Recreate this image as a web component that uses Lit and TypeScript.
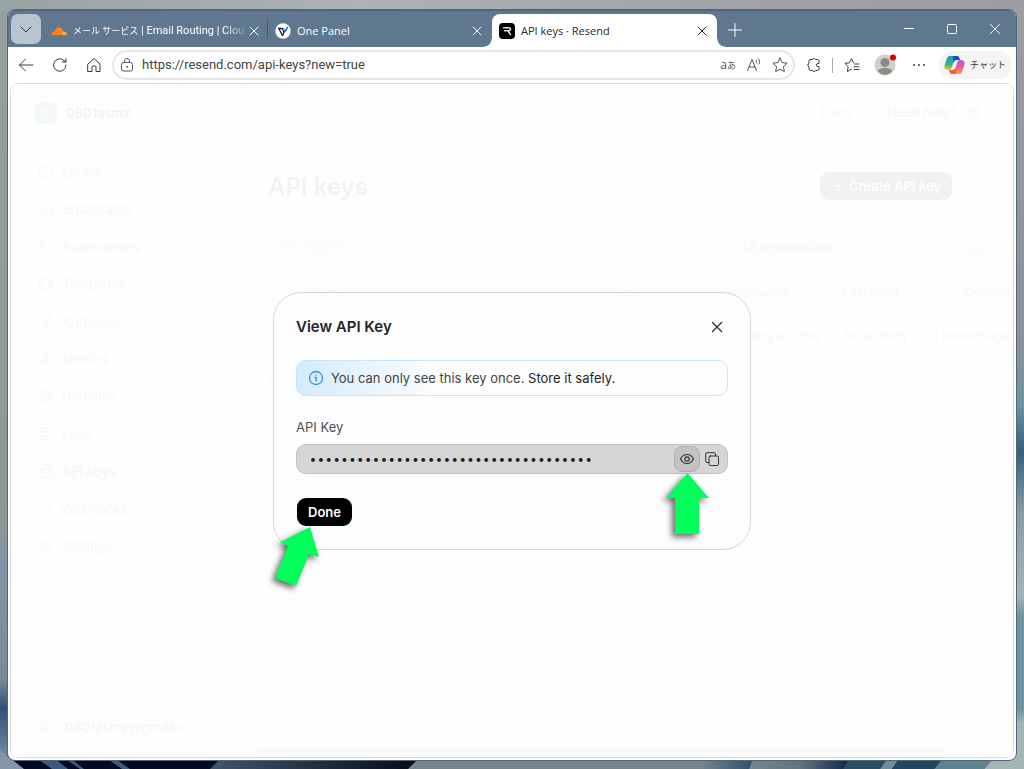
import { LitElement, html, css, svg, nothing } from "lit";
import { customElement, state } from "lit/decorators.js";

const glyph = (body: unknown, cls = "ic", box = "0 0 16 16") =>
  html`<svg class=${cls} viewBox=${box} aria-hidden="true">${body}</svg>`;

const NAV: { label: string; icon: unknown; current?: boolean }[] = [
  { label: "Emails", icon: svg`<path d="M1.5 2.5h13v11h-13zM1.5 3l6.500 6 6.500-6"/>` },
  { label: "Broadcasts", icon: svg`<path d="M4 3h8l2.200 5.500v5H1.800v-5zM1.800 9h3.700a2.500 2.500 0 0 0 5 0h3.700"/>` },
  { label: "Automations", icon: svg`<rect x="1.500" y="1.500" width="5" height="5" rx="1.500"/><rect x="9.500" y="9.500" width="5" height="5" rx="1.500"/><path d="M4 6.500V12h5.500"/>` },
  { label: "Templates", icon: svg`<rect x="4.500" y="2.500" width="7" height="11" rx="1"/><path d="M4.500 4h-3v8h3M11.500 4h3v8h-3"/>` },
  { label: "Audience", icon: svg`<circle cx="4" cy="3.500" r="1.700"/><circle cx="12" cy="3.500" r="1.700"/><circle cx="8" cy="8" r="2"/><path d="M1.500 9.500c0-2 4-2 4-1M14.500 9.500c0-2-4-2-4-1M4.500 14c0-3.500 7-3.500 7 0z"/>` },
  { label: "Metrics", icon: svg`<path d="M1.500 7.500h3v6h-3zM6.500 1.500h3v12h-3zM11.500 4.500h3v9h-3z"/>` },
  { label: "Domains", icon: svg`<circle cx="8" cy="8" r="6.700"/><path d="M1.300 8h13.400M8 1.300c-4 4-4 9.400 0 13.400 4-4 4-9.400 0-13.400z"/>` },
  { label: "Logs", icon: svg`<path d="M1.500 2.500h13M1.500 13.500h13M2 5.500h12v5H2z"/>` },
  { label: "API keys", current: true, icon: svg`<rect x="2.500" y="6.500" width="11" height="8" rx="1.500"/><path d="M5 6.500V4.500a3 3 0 0 1 6 0v2M8 9.500v2"/>` },
  { label: "Webhooks", icon: svg`<path d="M5 12V2.500M2 5.500l3-3 3 3M11 4v9.500M8 10.500l3 3 3-3"/>` },
  { label: "Settings", icon: svg`<path d="M1.500 3.500h2M6.500 3.500h8M1.500 8h7M11.500 8h3M1.500 12.500h2M6.500 12.500h8"/><circle cx="5" cy="3.500" r="1.500"/><circle cx="10" cy="8" r="1.500"/><circle cx="5" cy="12.500" r="1.500"/>` },
];

@customElement("browser-chrome")
export class BrowserChrome extends LitElement {
  static styles = css`
    :host { display: block; flex: none; font: 12px/16px "Open Sans", "Noto Sans CJK JP", sans-serif; color: #3c3c3c; }
    button { font: inherit; color: inherit; background: none; border: 0; padding: 0; margin: 0; display: grid; place-items: center; flex: none; }
    svg { display: block; flex: none; fill: none; stroke: currentColor; stroke-width: 1; stroke-linecap: round; stroke-linejoin: round; }
    .ic { width: 16px; height: 16px; }
    .strip { display: flex; height: 37px; background: #5f788f; color: #fff; border-top: 1px solid #4f677d; box-sizing: border-box; padding-left: 3px; }
    .menu { width: 30px; height: 30px; margin-top: 3px; border-radius: 7px; background: #b8c4cf; color: #333; }
    .tab { display: flex; align-items: center; flex: 0 0 225px; box-sizing: border-box; margin-top: 3px; padding: 0 7px 0 8px; min-width: 0; }
    .first { flex-basis: 226px; padding: 0 5px 0 10px; }
    .label { flex: 1; min-width: 0; overflow: hidden; white-space: nowrap; margin-left: 6px; font-size: 11px; }
    .kana { font-size: 9px; }
    .fade { font-family: Roboto, "Noto Sans CJK JP", sans-serif; -webkit-mask-image: linear-gradient(90deg, #000 88%, rgba(0, 0, 0, 0.15)); }
    .second { position: relative; }
    .second::before { content: ""; position: absolute; left: 0; top: 5px; height: 19px; width: 1px; background: #43596c; }
    .active { background: #fff; color: #2c2c2c; border-radius: 8px 8px 0 0; padding-left: 7px; position: relative; }
    .active::before, .active::after { content: ""; position: absolute; bottom: 0; width: 8px; height: 8px; }
    .active::before { left: -8px; background: radial-gradient(circle at 0 0, transparent 7px, #fff 8px); }
    .active::after { right: -8px; background: radial-gradient(circle at 100% 0, transparent 7px, #fff 8px); }
    .add { width: 36px; margin-top: 2px; }
    .win { width: 43px; }
    .wins { margin-left: auto; display: flex; }
    .bar { display: flex; align-items: center; height: 36px; background: #fff; padding: 0 4px 0 10px; }
    .nav { display: flex; gap: 18px; margin-right: 10px; }
    .addr { flex: 1; min-width: 0; display: flex; align-items: center; box-sizing: border-box; height: 30px; border: 2px solid #e6e6e6; border-radius: 15px; padding: 0 5px; gap: 10px; color: #555; }
    .url { flex: 1; min-width: 0; border: 0; outline: 0; padding: 0; background: none; font: 13px/20px Roboto, sans-serif; color: #444; margin-left: -3px; }
    .lang { font-size: 12px; }
    .right { display: flex; align-items: center; margin-left: 11px; }
    .sep { width: 1px; height: 15px; background: #aaa; margin: 0 11px 0 10px; }
    .me { margin: 0 15px 0 14px; }
    .dots { margin-right: 12px; }
    .chat { display: flex; align-items: center; gap: 5px; height: 28px; width: 73px; padding-left: 5px; box-sizing: border-box; border-radius: 14px; background: #f4f4f4; font-size: 9px; white-space: nowrap; }
  `;

  private cross = glyph(svg`<path d="M4 4l8 8M12 4l-8 8"/>`);

  render() {
    return html`
      <div class="strip" role="tablist">
        <button class="menu" aria-label="Tab actions">${glyph(svg`<path d="M3 6l5 5 5-5"/>`)}</button>
        <div class="tab first" role="tab">
          <svg class="ic" viewBox="0 0 16 16" style="stroke:none"><path fill="#f6821f" d="M.5 12c0-2.500 1-3.500 3-3.500C4.500 5 6.500 4 8.500 4.500c2.500 0 3.500 2.500 3.500 4L11 12z"/><path fill="#fbad41" d="M11.800 8.500c2.700-.5 4.200 1.200 4.200 3.500h-5.200z"/></svg>
          <span class="label fade"><span class="kana">メール サービス</span> | Email Routing | Clou</span>
          <button aria-label="Close tab">${this.cross}</button>
        </div>
        <div class="tab second" role="tab">
          <svg class="ic" viewBox="0 0 16 16"><circle cx="8" cy="8" r="7.700" fill="#fff" stroke="none"/><path d="M3.500 5l4 7.500 1.500-3-1.500-4H5" stroke="#15243d" stroke-width="1.400"/><path d="M8.500 6.500l1.500 2 2.500-4" stroke="#2a6fc0" stroke-width="1.600"/></svg>
          <span class="label">One Panel</span>
          <button aria-label="Close tab">${this.cross}</button>
        </div>
        <div class="tab active" role="tab" aria-selected="true">
          <svg class="ic" viewBox="0 0 16 16"><rect width="16" height="16" rx="4" fill="#000" stroke="none"/><path d="M4.500 4.800H10c2 0 2 3 0 3H5.500M9 8l2.500 3.500" stroke="#ddd" stroke-width="1.500"/></svg>
          <span class="label">API keys · Resend</span>
          <button aria-label="Close tab">${this.cross}</button>
        </div>
        <button class="add" aria-label="New tab">${glyph(svg`<path d="M8 1.500v13M1.500 8h13"/>`)}</button>
        <div class="wins">
          <button class="win" aria-label="Minimize">${glyph(svg`<path d="M3.500 7.500h9"/>`)}</button>
          <button class="win" aria-label="Maximize">${glyph(svg`<rect x="3.500" y="3.500" width="9" height="9" rx="1"/>`)}</button>
          <button class="win" aria-label="Close">${glyph(svg`<path d="M3.500 3.500l9 9M12.500 3.500l-9 9"/>`)}</button>
        </div>
      </div>
      <div class="bar">
        <div class="nav">
          <button aria-label="Back">${glyph(svg`<path d="M15 8H1.500M7.500 2L1.500 8l6 6"/>`)}</button>
          <button aria-label="Reload">${glyph(svg`<path d="M14 8a6.200 6.200 0 1 1-2-4.500L14 5M14 1.500V5h-3.500"/>`)}</button>
          <button aria-label="Home">${glyph(svg`<path d="M2 7l6-5.500L14 7v7.500h-4V10a1 1 0 0 0-1-1H7a1 1 0 0 0-1 1v4.500H2z"/>`)}</button>
        </div>
        <div class="addr">
          <button aria-label="Site information">${glyph(svg`<rect x="2.500" y="5.500" width="11" height="8.500" rx="2"/><path d="M5.500 5.500V4a2.500 2.500 0 0 1 5 0v1.500"/><circle cx="8" cy="9.800" r=".4" fill="currentColor"/>`)}</button>
          <input class="url" aria-label="Address" .value=${"https://resend.com/api-keys?new=true"} />
          <button class="lang" aria-label="Translate"><span>a<span class="kana">あ</span></span></button>
          <button aria-label="Read aloud">${glyph(svg`<path d="M1.500 13.500L6 2.500l4.500 11M3 10h6M10 3c1 1 1 2 .5 3M12 1.500c2 1.500 2 4 1 5.500"/>`)}</button>
          <button aria-label="Favorite">${glyph(svg`<path d="M8 1l2.100 4.600 5 .6-3.700 3.400 1 5L8 12.100 3.600 14.600l1-5L.9 6.200l5-.6z"/>`)}</button>
        </div>
        <div class="right">
          <button aria-label="Extensions">${glyph(svg`<path d="M4.500 2.500h2a1.600 1.600 0 0 1 3 0h2a1.500 1.500 0 0 1 1.500 1.500v2.500h-1a1.600 1.600 0 1 0 0 3.200h1V12a1.500 1.500 0 0 1-1.500 1.500h-2a1.600 1.600 0 0 1-3 0h-2A1.500 1.500 0 0 1 3 12V9.600a1.600 1.600 0 0 1 0-3.100V4a1.500 1.500 0 0 1 1.500-1.500z"/>`)}</button>
          <span class="sep"></span>
          <button aria-label="Favorites list">${glyph(svg`<path d="M9.500 6L7.500 1.500 5.500 5.800.9 6.400l3.300 3.200-.8 4.900 4-2.300M10.500 7H15M10 9.800h5M10 12.500h5"/>`)}</button>
          <button class="me" aria-label="Profile">
            <svg width="22" height="22" viewBox="0 0 22 22" style="stroke:none"><circle cx="11" cy="11" r="10.500" fill="#cfcfcb"/><circle cx="11" cy="8.500" r="4.500" fill="#8a8a86"/><path d="M4 17c0-4 14-4 14 0-4 5-10 5-14 0z" fill="#8a8a86"/><circle cx="19" cy="3.500" r="3" fill="#e00000"/></svg>
          </button>
          <button class="dots" aria-label="Settings and more">${glyph(svg`<g fill="currentColor" stroke="none"><circle cx="3" cy="8" r="1"/><circle cx="8" cy="8" r="1"/><circle cx="13" cy="8" r="1"/></g>`)}</button>
          <button class="chat">
            <svg width="21" height="20" viewBox="0 0 21 20" style="stroke:none">
              <defs>
                <linearGradient id="a" x2="0" y2="1"><stop stop-color="#1596e0"/><stop offset=".6" stop-color="#3cb878"/><stop offset="1" stop-color="#f2c81e"/></linearGradient>
                <linearGradient id="b" x2="0" y2="1"><stop stop-color="#a060f0"/><stop offset=".5" stop-color="#f05a8c"/><stop offset="1" stop-color="#ff9a4a"/></linearGradient>
              </defs>
              <path fill="url(#a)" d="M6 1h8c-2 0-3 1-4 4L8 12c-1 3-2 3-4 3-4 0-4-3-3-6l2-6c.5-1 1-2 3-2z"/>
              <path fill="#1c4fc4" d="M9 1h4c2 0 2 1 3 4h-3c-2 0-3 1-4 3z"/>
              <path fill="url(#b)" d="M15 19H7c2 0 3-1 4-4l2-7c1-3 2-3 4-3 4 0 4 3 3 6l-2 6c-.5 1-1 2-3 2z"/>
              <path fill="#f0622c" d="M12 19H8c-2 0-2-1-3-4h3c2 0 3-1 4-3z"/>
            </svg>
            チャット
          </button>
        </div>
      </div>
    `;
  }
}

@customElement("keys-page")
export class KeysPage extends LitElement {
  static styles = css`
    :host { display: flex; flex: 1; min-width: 0; min-height: 0; background: #fdfdfd; color: #222; font: 500 13px/18px Inter, sans-serif; }
    button, select, input { font: inherit; color: inherit; box-sizing: border-box; margin: 0; }
    button { background: none; border: 0; padding: 0; }
    svg { display: block; fill: none; stroke: currentColor; stroke-width: 1; stroke-linejoin: round; flex: none; }
    .ic { width: 16px; height: 16px; }
    .side { flex: 0 0 234px; min-width: 0; box-sizing: border-box; border-right: 1px solid #ccc; display: flex; flex-direction: column; padding: 18px 15px 19px 17px; }
    .team { display: flex; align-items: center; gap: 9px; padding: 0 5px 0 7px; height: 22px; font-weight: 600; }
    .badge { width: 22px; height: 22px; border-radius: 6px; display: grid; place-items: center; background: #2d918a; color: #fff; font: 600 12px/16px Inter, sans-serif; }
    .grow { flex: 1; }
    .nav { display: flex; flex-direction: column; justify-content: space-between; height: 404px; margin-top: 33px; }
    .nav a { display: flex; align-items: center; gap: 8px; height: 30px; padding-left: 10px; border-radius: 8px; color: #777; text-decoration: none; font-weight: 500; }
    .nav .cur { background: #e4e4e4; color: #555; }
    .user { margin-top: auto; display: flex; align-items: center; gap: 11px; padding: 0 5px 0 4px; color: #555; }
    .round { width: 22px; height: 22px; border-radius: 50%; background: #e4e4e4; display: grid; place-items: center; font-size: 12px; }
    .main { flex: 1; min-width: 0; display: flex; flex-direction: column; overflow: hidden; }
    .top { display: flex; align-items: center; justify-content: flex-end; gap: 22px; height: 56px; box-sizing: border-box; border-bottom: 1px solid #ccc; padding: 0 23px; }
    .top a { color: #777; text-decoration: none; font-weight: 400; }
    .help { display: flex; align-items: center; gap: 8px; height: 30px; padding: 0 6px 0 11px; border: 1px solid #aaa; border-radius: 10px; color: #666; }
    .kbd { width: 18px; height: 18px; border-radius: 5px; background: #ddd; font-size: 11px; }
    .body { padding: 32px 23px 0; flex: 1; }
    .head { display: flex; align-items: flex-start; gap: 9px; }
    h1 { flex: 1; margin: 0; font: 600 24px/30px Inter, sans-serif; }
    .create { display: flex; align-items: center; gap: 3px; height: 28px; padding: 0 11px 0 10px; border-radius: 9px; background: #000; color: #fff; font-weight: 600; }
    .sq { width: 29px; height: 29px; display: grid; place-items: center; border: 1px solid #bbb; border-radius: 9px; color: #777; }
    .filters { display: flex; gap: 9px; margin-top: 30px; }
    .search { flex: 1; display: flex; align-items: center; gap: 8px; height: 30px; padding-left: 12px; border: 1px solid #ccc; border-radius: 9px; background: #e8e8e8; box-sizing: border-box; color: #777; }
    .search input { flex: 1; border: 0; padding: 0; background: none; outline: 0; font-weight: 400; }
    .search input::placeholder { color: #aaa; }
    .pick { position: relative; flex: 0 0 223px; display: flex; }
    .pick select { flex: 1; appearance: none; height: 30px; padding: 0 11px; border: 1px solid #ccc; border-radius: 9px; background: #e8e8e8; color: #666; font-weight: 400; }
    .pick svg { position: absolute; right: 8px; top: 7px; color: #555; }
    .filters .sq { background: #e8e8e8; }
    table { margin-top: 15px; width: calc(100% + 23px); border-collapse: separate; border-spacing: 0; table-layout: fixed; font-weight: 400; }
    th { height: 29px; padding: 0; background: #ececec; border-block: 1px solid #ccc; text-align: left; font: 500 12px/16px Inter, sans-serif; color: #777; white-space: nowrap; }
    th:first-child { border-left: 1px solid #ccc; border-radius: 9px 0 0 9px; }
    td { height: 54px; padding: 0; color: #777; white-space: nowrap; }
    th:last-child, td:last-child { text-align: right; padding-right: 3px; }
    .c0 { width: 43px; } .c2 { width: 123px; } .c3 { width: 120px; } .c4 { width: 72px; } .c5 { width: 98px; }
    .box { display: block; margin: 0 0 0 12px; opacity: .3; }
    .pages { margin: 12px 0 0; color: #888; font-weight: 400; }
    .scroll { display: flex; align-items: center; height: 12px; padding-left: 12px; }
    .thumb { width: 91%; height: 6px; background: #888; }
  `;

  render() {
    return html`
      <aside class="side">
        <div class="team"><span class="badge">0</span><span class="grow">0801asmz</span>
          ${glyph(svg`<path d="M5 6l3-3 3 3M5 10l3 3 3-3"/>`)}</div>
        <nav class="nav">
          ${NAV.map(n => html`<a href="#" class=${n.current ? "cur" : ""} aria-current=${n.current ? "page" : nothing}>${glyph(n.icon)}${n.label}</a>`)}
        </nav>
        <div class="user"><span class="round">0</span><span class="grow">0801asmz@gmail.c...</span><span>···</span></div>
      </aside>
      <main class="main">
        <div class="top"><a href="#">Docs</a><button class="help">Need help?<span class="kbd">H</span></button></div>
        <div class="body">
          <div class="head">
            <h1>API keys</h1>
            <button class="create">${glyph(svg`<path d="M8 3v10M3 8h10"/>`)}Create API key</button>
            <button class="sq" aria-label="Code">${glyph(svg`<path d="M4.500 5L1.500 8l3 3M11.500 5l3 3-3 3M9.500 4l-3 8"/>`)}</button>
          </div>
          <div class="filters">
            <label class="search">${glyph(svg`<circle cx="6" cy="6" r="4.500"/><path d="M9.500 9.500L13 13"/>`)}<input placeholder="Search..." aria-label="Search" /></label>
            <div class="pick"><select aria-label="Permissions"><option>All permissions</option></select>${glyph(svg`<path d="M4 6l4 4 4-4"/>`)}</div>
            <button class="sq" aria-label="Download">${glyph(svg`<path d="M8 1.500v9M4.500 7L8 10.500 11.500 7M2 10v4h12v-4"/>`)}</button>
          </div>
          <table>
            <colgroup><col class="c0" /><col /><col class="c2" /><col class="c3" /><col class="c4" /><col class="c5" /></colgroup>
            <thead><tr><th><input class="box" type="checkbox" aria-label="Select all" /></th><th>Name</th><th>Token</th><th>Permission</th><th>Last used</th><th>Created</th></tr></thead>
            <tbody><tr><td></td><td></td><td></td><td>Sending access</td><td>No activity</td><td>1 minute ago</td></tr></tbody>
          </table>
          <p class="pages">Page 1</p>
        </div>
        <div class="scroll"><div class="thumb"></div></div>
      </main>
    `;
  }
}

@customElement("key-dialog")
export class KeyDialog extends LitElement {
  @state() private shown = false;

  static styles = css`
    :host { display: block; width: 478px; max-width: 100%; box-sizing: border-box; border: 1px solid #d4d4d4; border-radius: 28px; background: #fdfdfd; color: #252525; padding: 22px 22px 23px; font: 400 13px/18px Inter, sans-serif; }
    button { font: inherit; color: inherit; background: none; border: 0; padding: 0; margin: 0; display: grid; place-items: center; }
    svg { display: block; fill: none; stroke: currentColor; stroke-linecap: round; stroke-linejoin: round; }
    .ic { width: 16px; height: 16px; stroke-width: 1; }
    .head { display: flex; align-items: center; justify-content: space-between; height: 24px; padding-right: 3px; color: #333; }
    h2 { margin: 0; font: 600 15px/24px Inter, sans-serif; color: #252525; }
    .note { display: flex; align-items: center; gap: 7px; height: 36px; box-sizing: border-box; margin: 21px 0 0; padding: 0 11px; border: 1px solid #c6e4fa; border-radius: 10px; background: linear-gradient(90deg, #d3ebfd, #fdfdfd 33%); color: #444; }
    .note svg { color: #3b8fe0; }
    .note b { font-weight: 400; color: #252525; }
    .label { display: block; margin: 22px 0 8px; color: #505050; }
    .field { display: flex; align-items: center; height: 30px; box-sizing: border-box; border: 1px solid #c0c0c0; border-radius: 10px; background: #d6d6d6; padding: 0 3px 0 12px; }
    .key { flex: 1; min-width: 0; border: 0; padding: 0; background: none; outline: 0; font: 300 14px/18px Inter, sans-serif; color: #1c1c1c; }
    .act { width: 24px; height: 24px; color: #333; box-sizing: border-box; }
    .eye { width: 26px; height: 26px; border: 1px solid #b0b0b0; border-radius: 8px; background: #c3c3c3; }
    .done { height: 28px; margin: 24px 0 0 1px; padding: 0 11px; border-radius: 9px; background: #000; color: #fff; font-weight: 600; }
  `;

  render() {
    return html`
      <div class="head"><h2>View API Key</h2>
        <button aria-label="Close">${glyph(svg`<path stroke-width="1.400" d="M3.500 3.500l9 9M12.500 3.500l-9 9"/>`)}</button></div>
      <p class="note">${glyph(svg`<circle cx="8" cy="8" r="6.500" stroke-width="1.300"/><path stroke-width="1.400" d="M7 7.500h1.200V11M8 5v.1"/>`)}<span>You can only see this key once. <b>Store it safely.</b></span></p>
      <label class="label" for="key">API Key</label>
      <div class="field">
        <input class="key" id="key" readonly type="text" .value=${this.shown ? "" : "•".repeat(36)} />
        <button class="act eye" aria-label="Show key" @click=${() => (this.shown = !this.shown)}>${glyph(svg`<path stroke-width="1.200" d="M1.500 8c3-6 10-6 13 0-3 6-10 6-13 0z"/><circle cx="8" cy="8" r="2.200" stroke-width="1.200"/>`)}</button>
        <button class="act" aria-label="Copy">${glyph(svg`<path d="M4.500 11.500H3A1.300 1.300 0 0 1 1.700 10.200V3A1.300 1.300 0 0 1 3 1.700h7.200A1.300 1.300 0 0 1 11.500 3v1.500"/><rect x="5" y="5" width="9.500" height="9.500" rx="1.300"/>`)}</button>
      </div>
      <button class="done">Done</button>
    `;
  }
}

@customElement("app-root")
export class AppRoot extends LitElement {
  static styles = css`
    :host { display: block; position: relative; height: 100vh; box-sizing: border-box; padding: 9px 7px 8px; overflow: hidden; background: #8f9a9e; }
    .wall { position: absolute; inset: 0; width: 100%; height: 100%; }
    .window { position: relative; height: 100%; box-sizing: border-box; display: flex; flex-direction: column; border: 1px solid #4f677d; border-radius: 8px; overflow: hidden; background: #fff; }
    .view { position: relative; flex: 1; min-height: 0; display: flex; margin: 0 2px 2px; border: 1px solid #dcdcdc; border-radius: 8px; overflow: hidden; }
    .scrim { position: absolute; inset: 0; display: grid; place-items: center; background: rgba(254, 254, 254, 0.95); }
    .stage { position: relative; max-width: 100%; }
    .arrow { position: absolute; overflow: visible; fill: #00ff5a; filter: drop-shadow(-3px 3px 3px rgba(0, 0, 0, 0.6)); }
    .up { left: 393px; top: 181px; width: 43px; height: 62px; }
    .tilt { left: 2px; top: 235px; width: 45px; height: 60px; }
  `;

  render() {
    return html`
      <svg class="wall" viewBox="0 0 1024 769" preserveAspectRatio="none" aria-hidden="true">
        <defs>
          <linearGradient id="t"><stop stop-color="#98a4a3"/><stop offset=".35" stop-color="#abb3b3"/><stop offset=".75" stop-color="#a0a2a6"/><stop offset="1" stop-color="#9b9da2"/></linearGradient>
          <linearGradient id="l" x2="0" y2="1"><stop stop-color="#96a09f"/><stop offset=".68" stop-color="#8c9797"/><stop offset=".72" stop-color="#8195a8"/><stop offset=".88" stop-color="#7d8a97"/><stop offset=".92" stop-color="#2f527a"/><stop offset="1" stop-color="#8496a8"/></linearGradient>
          <linearGradient id="r" x2="0" y2="1"><stop stop-color="#9b9da2"/><stop offset=".45" stop-color="#8b9099"/><stop offset=".52" stop-color="#6e93a0"/><stop offset=".58" stop-color="#34607c"/><stop offset=".66" stop-color="#8b9ba2"/><stop offset=".77" stop-color="#a5b3b5"/><stop offset=".8" stop-color="#6e93a0"/><stop offset=".92" stop-color="#6e93a0"/><stop offset=".94" stop-color="#a5b5b5"/></linearGradient>
          <linearGradient id="s"><stop stop-color="#42566b"/><stop offset="1" stop-color="#060a18"/></linearGradient>
          <linearGradient id="g"><stop stop-color="#76848b"/><stop offset=".85" stop-color="#76848b"/><stop offset="1" stop-color="#2d4f68"/></linearGradient>
          <linearGradient id="n"><stop stop-color="#76868e"/><stop offset=".5" stop-color="#64747f"/><stop offset="1" stop-color="#0c2348"/></linearGradient>
        </defs>
        <rect width="1024" height="20" fill="url(#t)"/>
        <rect y="12" width="20" height="757" fill="url(#l)"/>
        <rect x="1004" y="12" width="20" height="757" fill="url(#r)"/>
        <rect y="755" width="1024" height="14" fill="#060a20"/>
        <path fill="#8496a8" d="M0 750l24 19H0z"/><path fill="#3d5a7c" d="M32 755l20 14h16l-18-14zM60 755l20 14h4l-18-14zM102 755l20 14h8l-20-14z"/>
        <path fill="url(#s)" d="M224 755l-14 14h200l12-14z"/>
        <path fill="url(#g)" d="M422 755h332l-5 14H408z"/>
        <path fill="url(#n)" d="M754 755l-5 14h94l8-14z"/>
        <path fill="#2a4d66" d="M851 755l-8 14h37l10-14z"/>
        <path fill="#6f8d98" d="M890 755l-10 14h12l10-14z"/><path fill="#23455f" d="M902 755l-10 14h42l12-14z"/><path fill="#5d8391" d="M946 755l-12 14h50l12-14z"/><path fill="#a5b5b5" d="M996 755l-12 14h40v-14z"/>
      </svg>
      <div class="window">
        <browser-chrome></browser-chrome>
        <div class="view">
          <keys-page></keys-page>
          <div class="scrim">
            <div class="stage">
              <key-dialog></key-dialog>
              <svg class="arrow up" viewBox="0 0 43 62"><path d="M21.500 0L43 25H33v36H9V25H0z"/></svg>
              <svg class="arrow tilt" viewBox="0 0 45 60"><path d="M35 0l9 30-10-3-13 32-21-8 13-32-8-3.500z"/></svg>
            </div>
          </div>
        </div>
      </div>
    `;
  }
}
